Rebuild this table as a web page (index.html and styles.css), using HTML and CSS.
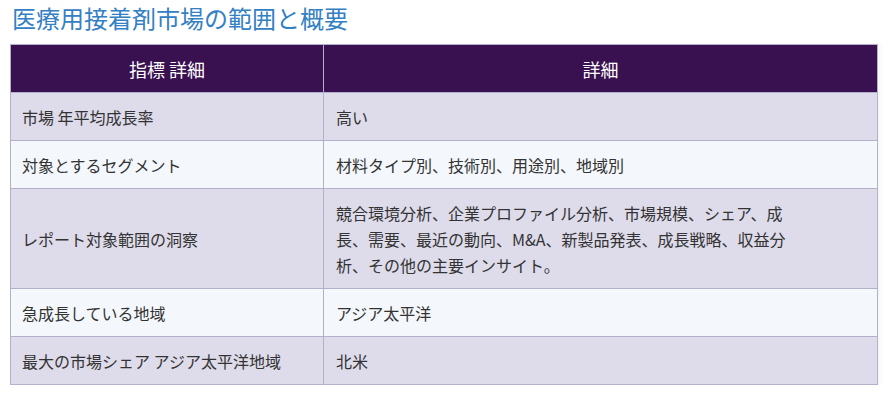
FILE: index.html
```html
<!DOCTYPE html>
<html lang="ja">
<head>
<meta charset="utf-8">
<link rel="stylesheet" href="styles.css">
</head>
<body>
<h2 class="title">医療用接着剤市場の範囲と概要</h2>
<div class="table-wrap">
<table class="summary">
  <thead>
    <tr><th>指標 詳細</th><th>詳細</th></tr>
  </thead>
  <tbody>
    <tr><td>市場 年平均成長率</td><td>高い</td></tr>
    <tr><td>対象とするセグメント</td><td>材料タイプ別、技術別、用途別、地域別</td></tr>
    <tr><td>レポート対象範囲の洞察</td><td>競合環境分析、企業プロファイル分析、市場規模、シェア、成長、需要、最近の動向、M&amp;A、新製品発表、成長戦略、収益分析、その他の主要インサイト。</td></tr>
    <tr><td>急成長している地域</td><td>アジア太平洋</td></tr>
    <tr><td>最大の市場シェア アジア太平洋地域</td><td>北米</td></tr>
  </tbody>
</table>
</div>
</body>
</html>
```

FILE: styles.css
```css
html, body {
  margin: 0;
  padding: 0;
  background: #ffffff;
}
body {
  padding: 0 13px 0 10px;
  font-family: "Noto Sans CJK JP", "Noto Sans", sans-serif;
  color: #333333;
}
.title {
  margin: 0;
  padding: 2px 0 0 2px;
  height: 44px;
  box-sizing: border-box;
  font-size: 24px;
  line-height: 32px;
  font-weight: 400;
  color: #3380c4;
}
.table-wrap {
  box-shadow: 3px 0 4px rgba(0,0,0,0.04);
}
.summary {
  width: 100%;
  border-collapse: collapse;
  font-size: 16px;
  line-height: 26px;
}
.summary th,
.summary td {
  border: 1px solid #b3b0cc;
  padding: 10.5px 11px;
  text-align: left;
  vertical-align: middle;
}
.summary th {
  background: #3a1150;
  color: #ffffff;
  font-size: 18px;
  font-weight: 400;
  text-align: center;
}
.summary th:first-child,
.summary td:first-child {
  width: 290px;
}
.summary tbody tr:nth-child(odd) td {
  background: #dedbea;
}
.summary tbody tr:nth-child(even) td {
  background: #f4f8fc;
}
.summary td:last-child {
  padding-left: 12px;
  padding-right: 88px;
}
```
